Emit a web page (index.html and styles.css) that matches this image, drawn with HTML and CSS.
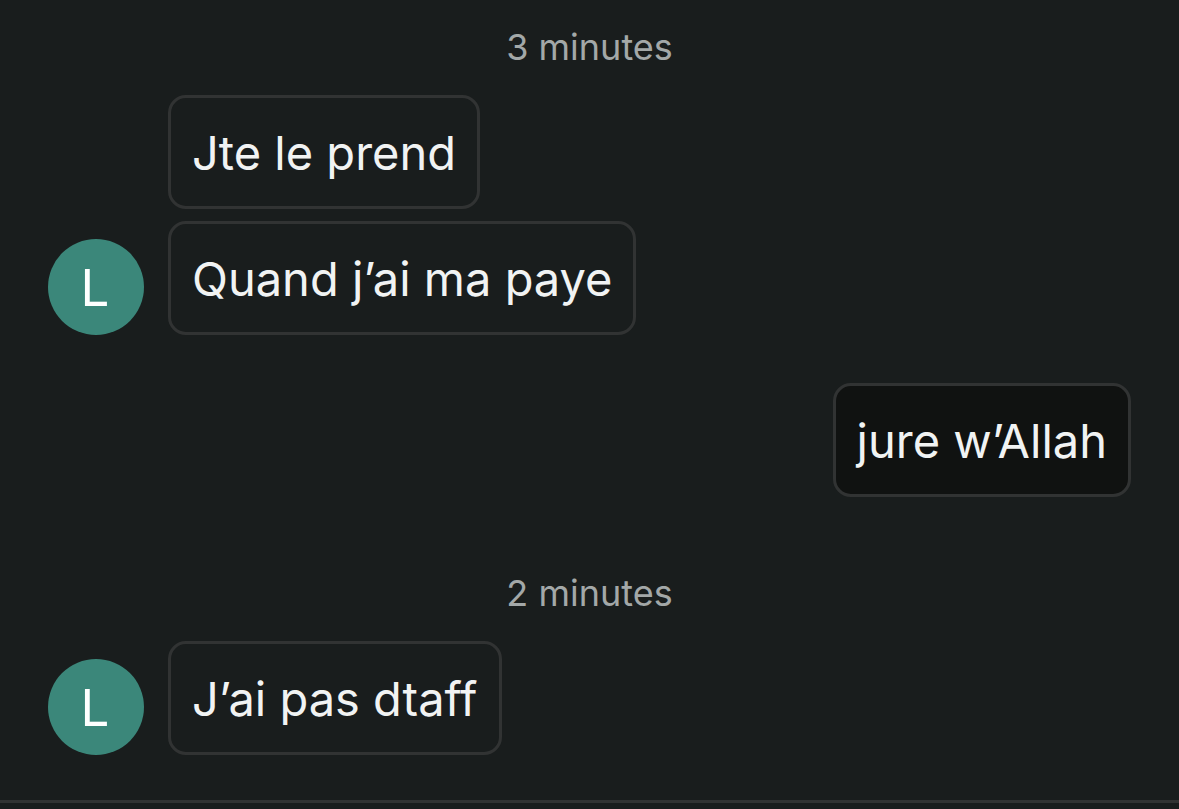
FILE: index.html
```
<!DOCTYPE html>
<html lang="fr">

<head>
  <meta charset="UTF-8">
  <meta name="viewport" content="width=device-width, initial-scale=1.0">
  <title>Messages</title>
  <link rel="stylesheet" href="styles.css">
</head>

<body>
  <main class="chat">
    <p class="time">3 minutes</p>
    <div class="row">
      <div class="avatar">L</div>
      <div class="group">
        <p class="bubble">Jte le prend</p>
        <p class="bubble">Quand j’ai ma paye</p>
      </div>
    </div>
    <div class="row mine">
      <p class="bubble">jure w’Allah</p>
    </div>
    <p class="time">2 minutes</p>
    <div class="row">
      <div class="avatar">L</div>
      <div class="group">
        <p class="bubble">J’ai pas dtaff</p>
      </div>
    </div>
  </main>
  <footer class="bottom"></footer>
</body>

</html>
```
FILE: styles.css
```
* {
  margin: 0;
  padding: 0;
  box-sizing: border-box;
}

body {
  display: flex;
  flex-direction: column;
  min-height: 100vh;
  background-color: #191d1d;
  color: #f1f3f3;
  font-family: Inter, sans-serif;
}

.chat {
  padding: 23px 48px 45px;
}

.time {
  margin-bottom: 24px;
  text-align: center;
  font-size: 36px;
  line-height: 48px;
  color: #a3a8a8;
}

.row {
  display: flex;
  align-items: flex-end;
  gap: 24px;
}

.group {
  display: flex;
  flex-direction: column;
  align-items: flex-start;
  gap: 12px;
}

.avatar {
  flex: none;
  width: 96px;
  height: 96px;
  padding-right: 2px;
  border-radius: 50%;
  background-color: #3b877a;
  color: #fff;
  text-align: center;
  font-size: 51px;
  line-height: 98px;
}

.bubble {
  padding: 22px 21px 20px;
  border: 3px solid #313333;
  border-radius: 18px;
  font-size: 47px;
  line-height: 66px;
}

/* sent messages */
.mine {
  justify-content: flex-end;
  margin: 48px 0 72px;
}

.mine .bubble {
  background-color: #101211;
}

.bottom {
  flex: 1;
  border-top: 3px solid #313333;
}
```
